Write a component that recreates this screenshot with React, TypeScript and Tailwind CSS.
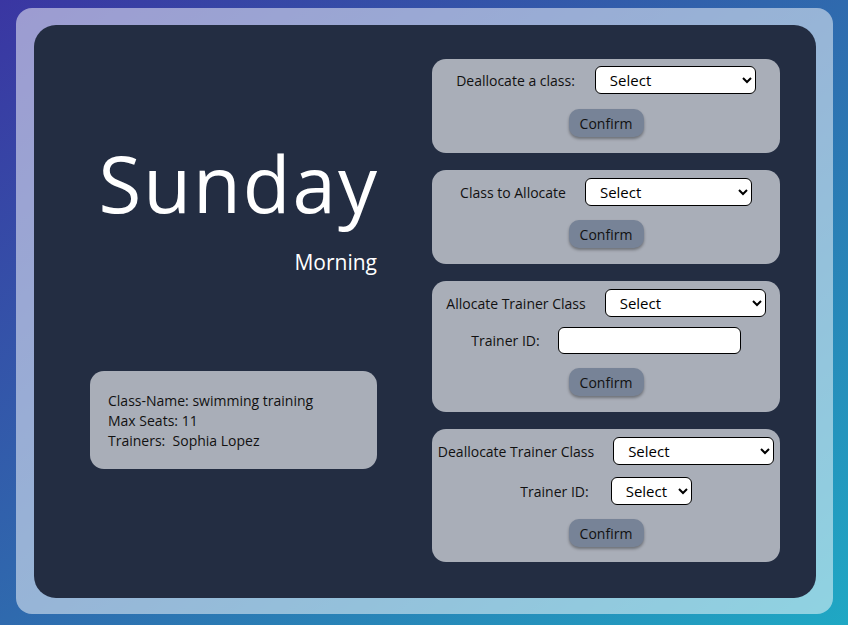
import React from 'react';

const font = { fontFamily: '"Open Sans", "Noto Sans", sans-serif' };

function Confirm() {
  return (
    <button className="h-[28px] w-[75px] rounded-[10px] bg-[#778397] text-[14px] text-[#111] shadow-[0_2px_3px_rgba(0,0,0,0.35)]">
      Confirm
    </button>
  );
}

function Picker({ w }: { w: string }) {
  return (
    <select className={`${w} h-[28px] rounded-[6px] border border-black bg-white pl-[10px] text-[15px] text-black`}>
      <option>Select</option>
    </select>
  );
}

export default function App() {
  return (
    <div
      className="h-[625px] w-[848px] overflow-hidden bg-[linear-gradient(to_bottom_right,#3a36a2_0%,#2f6aae_50%,#1fa8c4_100%)] pl-4 pr-[15px] pt-2"
      style={font}
    >
      {/* outer glass panel */}
      <div className="h-[606px] rounded-[16px] bg-white/50 py-[17px] pl-[18px] pr-[17px]">
        {/* dark panel */}
        <div className="flex h-[573px] rounded-[22px] bg-[#232d42] pl-[56px] pr-[36px] pt-[34px]">
          {/* left side */}
          <div className="flex w-[287px] flex-col">
            <div className="mt-[85px] flex flex-col items-end text-white">
              <div className="mr-[-2px] text-[78px] leading-none tracking-[2px]">Sunday</div>
              <div className="mt-[30px] text-[21px] leading-none">Morning</div>
            </div>
            <div className="mt-[98px] h-[98px] rounded-[14px] bg-[#a9aeb8] px-[18px] pt-[20px] text-[14px] leading-[20px] text-[#111]">
              <div>Class-Name: swimming training</div>
              <div>Max Seats: 11</div>
              <div>Trainers:&nbsp; Sophia Lopez</div>
            </div>
          </div>

          {/* right side */}
          <div className="ml-[55px] flex w-[348px] flex-col gap-[17px] text-[14px] text-[#111]">
            <div className="flex h-[94px] flex-col items-center rounded-[14px] bg-[#a9aeb8] pt-[7px]">
              <div className="flex items-center gap-5">
                <span>Deallocate a class:</span>
                <Picker w="w-[161px]" />
              </div>
              <div className="mt-[15px]">
                <Confirm />
              </div>
            </div>

            <div className="flex h-[94px] flex-col items-center rounded-[14px] bg-[#a9aeb8] pt-[8px]">
              <div className="flex items-center gap-[19px]">
                <span>Class to Allocate</span>
                <Picker w="w-[167px]" />
              </div>
              <div className="mt-[14px]">
                <Confirm />
              </div>
            </div>

            <div className="flex h-[131px] flex-col items-center rounded-[14px] bg-[#a9aeb8] pt-[8px]">
              <div className="flex items-center gap-[19px]">
                <span>Allocate Trainer Class</span>
                <Picker w="w-[161px]" />
              </div>
              <div className="mt-[10px] flex items-center gap-[18px]">
                <span>Trainer ID:</span>
                <input className="h-[27px] w-[183px] rounded-[6px] border border-black bg-white px-2" />
              </div>
              <div className="mt-[14px]">
                <Confirm />
              </div>
            </div>

            <div className="flex h-[133px] flex-col items-center rounded-[14px] bg-[#a9aeb8] pt-[8px]">
              <div className="flex items-center gap-[19px]">
                <span>Deallocate Trainer Class</span>
                <Picker w="w-[161px]" />
              </div>
              <div className="mt-[12px] flex items-center gap-[22px]">
                <span>Trainer ID:</span>
                <Picker w="w-[81px]" />
              </div>
              <div className="mt-[14px]">
                <Confirm />
              </div>
            </div>
          </div>
        </div>
      </div>
    </div>
  );
}
